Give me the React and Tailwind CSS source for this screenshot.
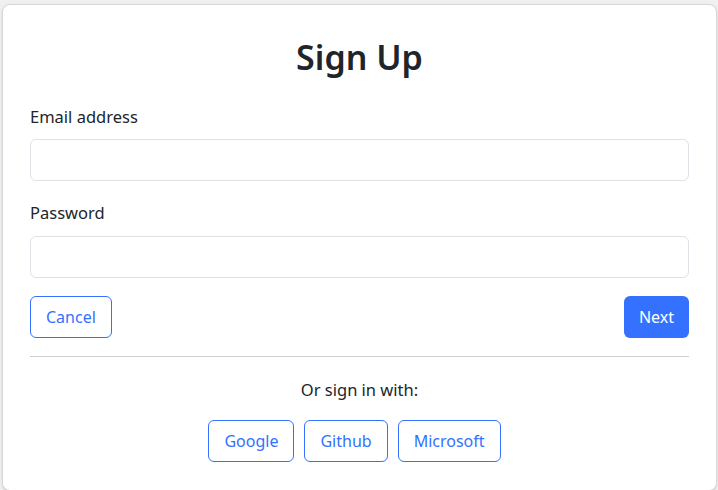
import { useState } from 'react';

const font = { fontFamily: '"Noto Sans", "Open Sans", sans-serif' };

function OutlineButton({ children, className = '' }) {
  return (
    <button
      type="button"
      className={`h-[42px] px-[15px] rounded-[6px] border border-[#3471ff] text-[#3471ff] text-[16px] leading-6 bg-white ${className}`}
    >
      {children}
    </button>
  );
}

export default function App() {
  const [email, setEmail] = useState('');
  const [password, setPassword] = useState('');

  return (
    <div className="w-[718px] h-[490px] overflow-hidden bg-[#f0f0f0] pt-[4px]" style={font}>
      <div className="ml-[2px] mr-[1px] bg-white border border-[#d8d8d8] rounded-[8px] shadow-sm px-[27px] pt-[32px] pb-[28px] text-[#212529]">
        <h2 className="text-center text-[34px] leading-[1.2] font-semibold">Sign Up</h2>

        <form className="mt-[27px]" onSubmit={(e) => e.preventDefault()}>
          <label className="block text-[16.5px] leading-6 mb-[10px]">Email address</label>
          <input
            type="email"
            value={email}
            onChange={(e) => setEmail(e.target.value)}
            className="block w-full h-[42px] px-3 rounded-[6px] border border-[#dee2e6] outline-none"
          />

          <label className="block text-[16.5px] leading-6 mt-[20px] mb-[11px]">Password</label>
          <input
            type="password"
            value={password}
            onChange={(e) => setPassword(e.target.value)}
            className="block w-full h-[42px] px-3 rounded-[6px] border border-[#dee2e6] outline-none"
          />

          <div className="flex justify-between items-center mt-[18px]">
            <OutlineButton>Cancel</OutlineButton>
            <button
              type="submit"
              className="h-[42px] px-[15px] rounded-[6px] bg-[#3471ff] text-white text-[16px] leading-6"
            >
              Next
            </button>
          </div>
        </form>

        <hr className="mt-[18px] border-0 border-t border-[#cfcfcf]" />

        <p className="text-center text-[16.5px] leading-6 mt-[21px]">Or sign in with:</p>

        <div className="flex justify-center mt-[18px]">
          <OutlineButton className="mr-[10px]">Google</OutlineButton>
          <OutlineButton className="mr-[10px]">Github</OutlineButton>
          <OutlineButton className="mr-[10px]">Microsoft</OutlineButton>
        </div>
      </div>
    </div>
  );
}
